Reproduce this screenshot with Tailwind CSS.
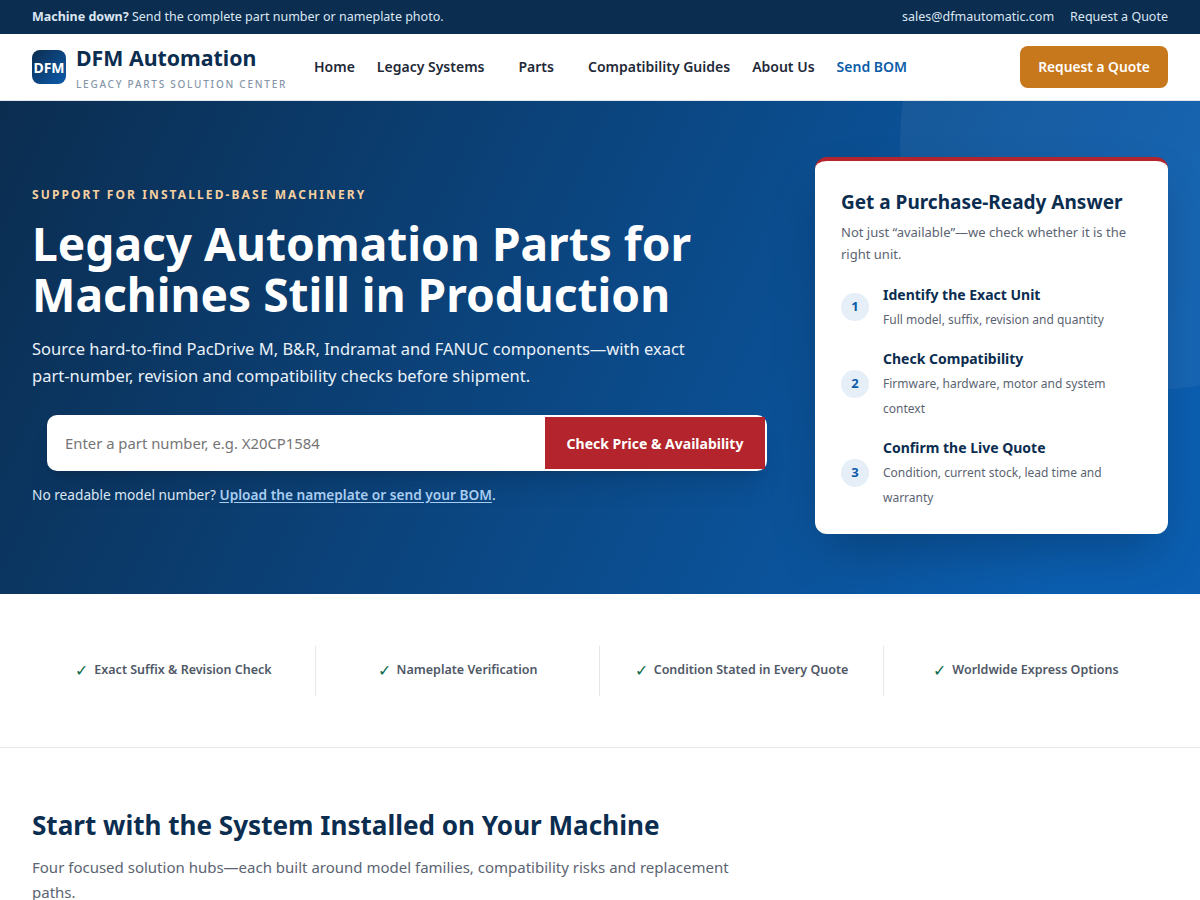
<!DOCTYPE html>
<html lang="en">
<head>
  <meta charset="UTF-8" />
  <title>DFM Automation - Legacy Parts Solution Center</title>
  <script src="https://cdn.jsdelivr.net/npm/@tailwindcss/browser@4"></script>
</head>
<body class="h-[900px] overflow-hidden bg-white font-['Noto_Sans',sans-serif]">
  <!-- Top bar -->
  <div class="h-[34px] bg-[#0b2d50] px-8 flex items-center justify-between text-[12.5px] text-[#dbe6f2]">
    <p><strong class="font-bold">Machine down?</strong> Send the complete part number or nameplate photo.</p>
    <div class="flex gap-4">
      <a href="#">sales@dfmautomatic.com</a>
      <a href="#">Request a Quote</a>
    </div>
  </div>

  <!-- Header -->
  <header class="h-[67px] bg-white border-b border-[#e5e7eb] px-8 flex items-center justify-between">
    <div class="flex items-center">
      <a href="#" class="flex items-center gap-[10px] w-[271px]">
        <span class="w-[34px] h-[34px] rounded-lg bg-gradient-to-br from-[#0b2d50] to-[#0b5cad] text-white text-[14px] font-bold flex items-center justify-center">DFM</span>
        <span class="flex flex-col mt-[1px]">
          <span class="text-[21.3px] leading-[28px] font-bold text-[#0b2d50]">DFM Automation</span>
          <span class="mt-[5px] text-[10px] leading-[14px] font-medium tracking-[1.75px] text-[#8696a8]">LEGACY PARTS SOLUTION CENTER</span>
        </span>
      </a>
      <nav class="flex items-center pb-[2px] text-[14px] font-semibold text-[#1f2937]">
        <a href="#" class="mx-[11px]">Home</a>
        <a href="#" class="mx-[11px]">Legacy Systems</a>
        <a href="#" class="ml-[23px] mr-[11px]">Parts</a>
        <a href="#" class="ml-[23px] mr-[11px]">Compatibility Guides</a>
        <a href="#" class="mx-[11px]">About Us</a>
        <a href="#" class="mx-[11px] text-[#0b5ca8]">Send BOM</a>
      </nav>
    </div>
    <a href="#" class="h-[42px] w-[148px] rounded-lg bg-[#c8781c] text-white text-[13.75px] font-semibold flex items-center justify-center">Request a Quote</a>
  </header>

  <!-- Hero -->
  <section class="relative h-[493px] overflow-hidden bg-[linear-gradient(115deg,#0b2d50,#0b5eb0_90%)] px-8 pt-[56px] pb-[60px] flex items-center gap-12">
    <div class="absolute left-[900px] top-[-211px] w-[500px] h-[500px] rounded-full bg-white/5"></div>
    <div class="relative w-[735px]">
      <p class="text-[12px] leading-[18px] font-bold tracking-[2.1px] text-[#f6cfa0]">SUPPORT FOR INSTALLED-BASE MACHINERY</p>
      <h1 class="mt-[15px] text-[46.1px] leading-[50.6px] font-bold text-white">Legacy Automation Parts for<br />Machines Still in Production</h1>
      <p class="mt-[15px] text-[16.5px] leading-[27px] text-[#eaf1f8]">Source hard-to-find PacDrive M, B&amp;R, Indramat and FANUC components—with exact<br />part-number, revision and compatibility checks before shipment.</p>
      <form class="mt-[26px] ml-[15px] w-[720px] h-[56px] p-[2px] rounded-[10px] bg-white shadow-xl flex">
        <input type="text" placeholder="Enter a part number, e.g. X20CP1584" class="flex-1 min-w-0 px-4 text-[14.85px] text-[#1f2937] placeholder:text-[#757575] outline-none bg-transparent" />
        <button type="button" class="w-[220px] bg-[#b3242c] text-white text-[14px] font-bold">Check Price &amp; Availability</button>
      </form>
      <p class="mt-[14px] text-[13.68px] leading-[20px] text-[#dbe6f2]">No readable model number? <a href="#" class="font-semibold text-[#a9cdf0] underline underline-offset-2">Upload the nameplate or send your BOM</a>.</p>
    </div>

    <!-- Answer card -->
    <aside class="relative w-[353px] shrink-0 rounded-xl border-t-4 border-[#b3242c] bg-white px-[26px] pt-[27px] pb-[24px] shadow-2xl">
      <h2 class="text-[19px] leading-[28px] font-bold text-[#0b2d50]">Get a Purchase-Ready Answer</h2>
      <p class="mt-[5px] text-[13px] leading-[22px] text-[#5b6472]">Not just “available”—we check whether it is the right unit.</p>
      <ol class="mt-[20px] flex flex-col gap-[17px]">
        <li class="flex items-center gap-[14px]">
          <span class="w-7 h-7 -mt-[3px] shrink-0 rounded-full bg-[#e6eef7] text-[#0b5ca8] text-[13px] font-bold flex items-center justify-center">1</span>
          <div>
            <h3 class="text-[14px] leading-[20px] font-bold text-[#0b2d50]">Identify the Exact Unit</h3>
            <p class="mt-[2px] text-[12px] leading-[25px] text-[#5b6472]">Full model, suffix, revision and quantity</p>
          </div>
        </li>
        <li class="flex items-center gap-[14px]">
          <span class="w-7 h-7 -mt-[3px] shrink-0 rounded-full bg-[#e6eef7] text-[#0b5ca8] text-[13px] font-bold flex items-center justify-center">2</span>
          <div>
            <h3 class="text-[14px] leading-[20px] font-bold text-[#0b2d50]">Check Compatibility</h3>
            <p class="mt-[2px] text-[12px] leading-[25px] text-[#5b6472]">Firmware, hardware, motor and system context</p>
          </div>
        </li>
        <li class="flex items-center gap-[14px]">
          <span class="w-7 h-7 -mt-[3px] shrink-0 rounded-full bg-[#e6eef7] text-[#0b5ca8] text-[13px] font-bold flex items-center justify-center">3</span>
          <div>
            <h3 class="text-[14px] leading-[20px] font-bold text-[#0b2d50]">Confirm the Live Quote</h3>
            <p class="mt-[2px] text-[12px] leading-[25px] text-[#5b6472]">Condition, current stock, lead time and warranty</p>
          </div>
        </li>
      </ol>
    </aside>
  </section>

  <!-- Trust strip -->
  <section class="h-[154px] border-b border-[#e5e7eb] px-8 flex items-center">
    <div class="w-full grid grid-cols-4 text-[12.5px] font-semibold text-[#4f5866]">
      <div class="h-[50px] pb-[1px] flex items-center justify-center gap-[6px] border-r border-[#e5e7eb]"><span class="text-[#0f6b4f] text-[16px] font-normal">✓</span>Exact Suffix &amp; Revision Check</div>
      <div class="h-[50px] pb-[1px] flex items-center justify-center gap-[6px] border-r border-[#e5e7eb]"><span class="text-[#0f6b4f] text-[16px] font-normal">✓</span>Nameplate Verification</div>
      <div class="h-[50px] pb-[1px] flex items-center justify-center gap-[6px] border-r border-[#e5e7eb]"><span class="text-[#0f6b4f] text-[16px] font-normal">✓</span>Condition Stated in Every Quote</div>
      <div class="h-[50px] pb-[1px] flex items-center justify-center gap-[6px]"><span class="text-[#0f6b4f] text-[16px] font-normal">✓</span>Worldwide Express Options</div>
    </div>
  </section>

  <!-- Solution hubs -->
  <section class="px-8 pt-[56px]">
    <h2 class="text-[26.08px] leading-[42px] font-bold text-[#0b2d50]">Start with the System Installed on Your Machine</h2>
    <p class="mt-[9px] w-[720px] text-[15px] leading-[25px] text-[#5b6472]">Four focused solution hubs—each built around model families, compatibility risks and replacement paths.</p>
  </section>
</body>
</html>
